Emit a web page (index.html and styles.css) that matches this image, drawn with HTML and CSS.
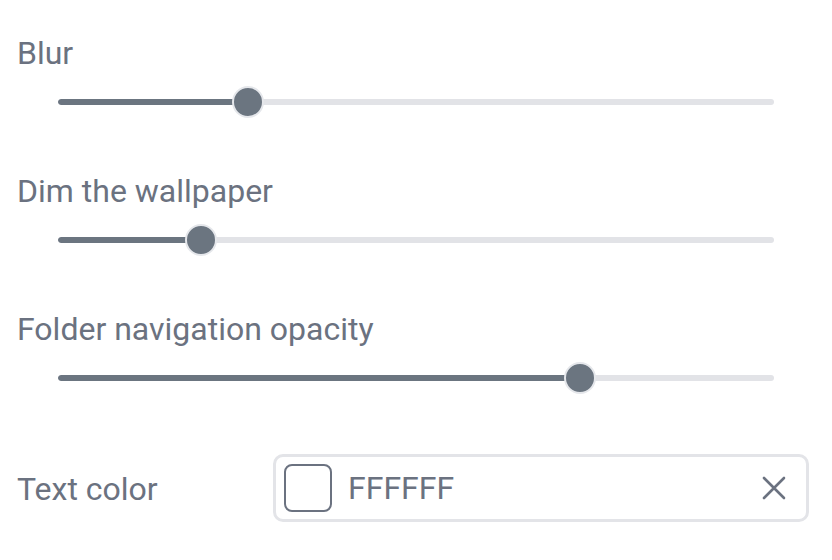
FILE: index.html
```html
<!DOCTYPE html>
<html>
<head>
<meta charset="utf-8">
<link rel="stylesheet" href="styles.css">
</head>
<body>
<div class="panel">
  <div class="field">
    <div class="label">Blur</div>
    <div class="slider">
      <div class="track"><div class="fill" style="width:26.6%"></div></div>
      <div class="thumb" style="left:26.6%"></div>
    </div>
  </div>
  <div class="field">
    <div class="label">Dim the wallpaper</div>
    <div class="slider">
      <div class="track"><div class="fill" style="width:20%"></div></div>
      <div class="thumb" style="left:20%"></div>
    </div>
  </div>
  <div class="field">
    <div class="label">Folder navigation opacity</div>
    <div class="slider">
      <div class="track"><div class="fill" style="width:72.9%"></div></div>
      <div class="thumb" style="left:72.9%"></div>
    </div>
  </div>
  <div class="color-row">
    <div class="label">Text color</div>
    <div class="color-input">
      <span class="swatch"></span>
      <span class="hex">FFFFFF</span>
      <svg class="clear" width="26" height="26" viewBox="0 0 26 26" fill="none" stroke="#6b7280" stroke-width="2.6" stroke-linecap="round">
        <path d="M3 3 L23 23 M23 3 L3 23"/>
      </svg>
    </div>
  </div>
</div>
</body>
</html>
```
FILE: styles.css
```css
html, body {
  margin: 0;
  padding: 0;
  background: #ffffff;
}
body {
  font-family: Roboto, "Liberation Sans", sans-serif;
  color: #6b7280;
}
.panel {
  padding: 32px 17px 0 17px;
}
.field {
  margin-bottom: 52px;
}
.field:nth-child(3) {
  margin-bottom: 60px;
}
.label {
  font-size: 32px;
  line-height: 42px;
  height: 40px;
}
.slider {
  position: relative;
  margin: 14px 41px 0 41px;
  height: 32px;
  display: flex;
  align-items: center;
}
.track {
  width: 100%;
  height: 6px;
  border-radius: 3px;
  background: #e2e3e7;
  overflow: hidden;
}
.fill {
  height: 100%;
  background: #6b7580;
  border-radius: 3px;
}
.thumb {
  position: absolute;
  top: 0;
  width: 28px;
  height: 28px;
  margin-left: -16px;
  border-radius: 50%;
  background: #6b7580;
  border: 2px solid #e5e7eb;
}
.color-row {
  display: flex;
  align-items: center;
}
.color-row .label {
  width: 256px;
}
.color-input {
  flex: 1;
  height: 62px;
  margin-right: 6px;
  border: 3px solid #e3e4e8;
  border-radius: 10px;
  display: flex;
  align-items: center;
  padding: 0 19px 0 8px;
}
.swatch {
  width: 44px;
  height: 44px;
  border: 2px solid #6b7280;
  border-radius: 8px;
  background: #fff;
}
.hex {
  font-size: 32px;
  margin-left: 16px;
  flex: 1;
}
.clear {
  display: block;
}
```
